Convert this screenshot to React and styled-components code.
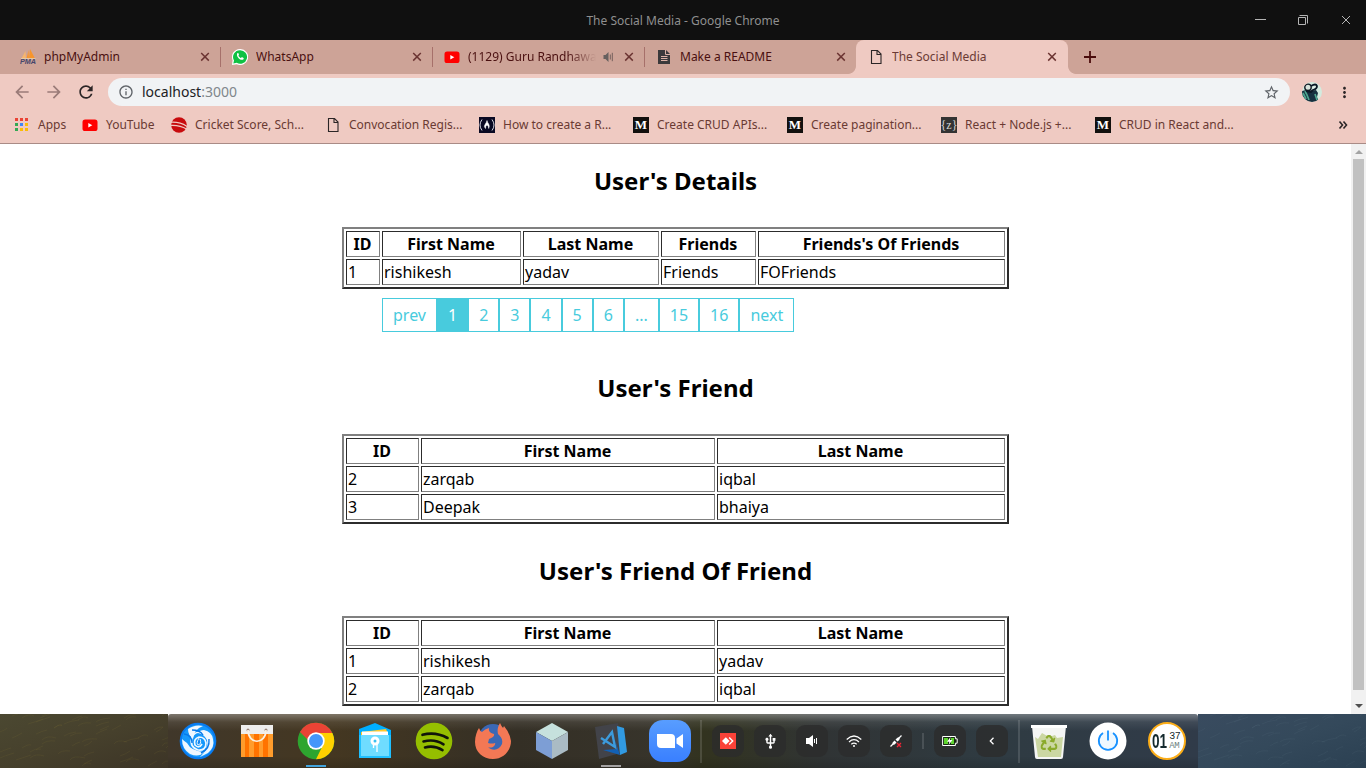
import React from "react";
import styled, { createGlobalStyle, css } from "styled-components";
import {
  MdArrowBack,
  MdArrowForward,
  MdRefresh,
  MdInfoOutline,
  MdStarBorder,
  MdMoreVert,
  MdWifi,
  MdUsb,
} from "react-icons/md";
import { FaRecycle } from "react-icons/fa";

const GlobalStyle = createGlobalStyle`
  * { box-sizing: border-box; }
  body { margin: 0; overflow: hidden; font-family: "Noto Sans", sans-serif; }
  svg { display: block; flex: none; }
`;

const Desktop = styled.div`
  width: 1366px;
  height: 768px;
  display: flex;
  flex-direction: column;
  overflow: hidden;
`;

/* Window frame */
const TitleBar = styled.header`
  height: 40px;
  flex: none;
  display: grid;
  grid-template-columns: 1fr auto 1fr;
  align-items: center;
  background: #101010;
  color: #8f8f8f;
  font-size: 12px;
`;
const WindowButtons = styled.div`
  grid-column: 3;
  display: flex;
  justify-content: flex-end;
  gap: 27px;
  padding-right: 12px;
`;
const WindowTitle = styled.div`
  grid-column: 2;
`;

/* Tabs */
const TabStrip = styled.nav`
  height: 34px;
  flex: none;
  display: flex;
  padding-left: 8px;
  background: #cda397;
`;
const Tab = styled.div`
  position: relative;
  width: 212px;
  display: flex;
  align-items: center;
  gap: 8px;
  padding: 0 ${(p) => (p.$active ? 11 : 10)}px 0 12px;
  font-size: 12px;
  color: ${(p) => (p.$active ? "#6b3a34" : "#4a1010")};
  ${(p) =>
    p.$divider &&
    css`
      &::after {
        content: "";
        position: absolute;
        right: -1px;
        top: 7px;
        width: 1px;
        height: 20px;
        background: #a6706a;
      }
    `}
  ${(p) =>
    p.$active &&
    css`
      background: #efcac2;
      border-radius: 8px 8px 0 0;
      &::before,
      &::after {
        content: "";
        position: absolute;
        bottom: 0;
        width: 8px;
        height: 8px;
      }
      &::before {
        left: -8px;
        background: radial-gradient(circle at 0 0, #cda397 7.5px, #efcac2 8.3px);
      }
      &::after {
        right: -8px;
        background: radial-gradient(circle at 100% 0, #cda397 7.5px, #efcac2 8.3px);
      }
    `}
`;
const TabLabel = styled.span`
  flex: 1;
  min-width: 0;
  padding-bottom: 2px;
  overflow: hidden;
  white-space: nowrap;
  ${(p) => p.$fade && "mask-image: linear-gradient(90deg, #000 78%, transparent 100%);"}
`;
const NewTab = styled.div`
  display: flex;
  align-items: center;
  padding-left: 16px;
`;

/* Toolbar */
const Toolbar = styled.div`
  height: 36px;
  flex: none;
  display: flex;
  align-items: center;
  background: #efcac2;
  padding-left: 12px;
`;
const NavButton = styled.div`
  width: 32px;
  color: ${(p) => (p.$dim ? "#9a7b78" : "#2b2526")};
`;
const AddressBar = styled.div`
  width: 1182px;
  height: 28px;
  display: flex;
  align-items: center;
  gap: 8px;
  padding: 0 10px;
  border-radius: 14px;
  background: #f1f3f5;
  color: #5f6368;
`;
const Address = styled.div`
  flex: 1;
  padding-bottom: 2px;
  font-size: 14px;
  color: #80868b;
  b {
    font-weight: 400;
    color: #202124;
  }
`;
const ToolbarEnd = styled.div`
  display: flex;
  align-items: center;
  gap: 14px;
  padding-left: 12px;
  color: #2b2526;
`;

const BookmarkBar = styled.div`
  height: 34px;
  flex: none;
  display: flex;
  align-items: center;
  padding: 0 0 3px 13px;
  border-bottom: 1px solid #a98b86;
  background: #efcac2;
`;
const Bookmark = styled.div`
  width: ${(p) => p.$w || 154}px;
  display: flex;
  align-items: center;
  gap: 8px;
  font-size: 12px;
  color: #6a3a33;
`;
const BookmarkLabel = styled.span`
  padding-bottom: 2px;
  white-space: nowrap;
`;
const Overflow = styled.div`
  margin-left: 89px;
  color: #2b2526;
`;
const SquareLogo = styled.span`
  width: 16px;
  height: 16px;
  flex: none;
  display: flex;
  align-items: center;
  justify-content: center;
  background: ${(p) => p.$bg};
  color: ${(p) => p.$ink || "#fff"};
  font: ${(p) => p.$font};
`;

/* Page */
const Viewport = styled.div`
  height: 570px;
  flex: none;
  display: flex;
  background: #fff;
`;
const Page = styled.main`
  flex: 1;
  height: 570px;
  overflow: hidden;
  padding: 20px 0 0 342px;
  color: #000;
  font-size: 16px;
`;
const Section = styled.section`
  width: 667px;
  margin-bottom: ${(p) => p.$after}px;
`;
const Heading = styled.h2`
  margin: 0 0 ${(p) => p.$gap || 30}px;
  font-size: 24px;
  line-height: 33px;
  text-align: center;
`;
const Table = styled.table`
  width: 667px;
  table-layout: fixed;
  border-collapse: separate;
  border-spacing: 2px;
  border: 2px solid;
  border-color: #808080 #2c2c2c #2c2c2c #808080;
  line-height: 22px;
`;
const cell = css`
  height: 26px;
  padding: 1px;
  border: 1px solid;
  border-color: #2c2c2c #808080 #808080 #2c2c2c;
`;
const Th = styled.th`
  ${cell}
  padding-right: 2px;
`;
const Td = styled.td`
  ${cell}
`;
const Pager = styled.ul`
  display: flex;
  list-style: none;
  margin: 9px 0 0;
  padding: 0 0 0 40px;
`;
const PageLink = styled.li`
  border: 1px solid #48cbdd;
  padding: 5px 10px;
  line-height: 22px;
  color: ${(p) => (p.$on ? "#fff" : "#48cbdd")};
  background: ${(p) => (p.$on ? "#48cbdd" : "#fff")};
`;
const ScrollTrack = styled.div`
  width: 15px;
  display: flex;
  flex-direction: column;
  align-items: center;
  justify-content: space-between;
  padding: 6px 0;
  background: #f1f1f1;
`;
const ScrollThumb = styled.div`
  width: 11px;
  height: 531px;
  margin: 5px 0 auto;
  background: #c1c1c1;
`;

/* Dock */
const Wallpaper = styled.footer`
  height: 54px;
  flex: none;
  display: grid;
  grid-template-columns: 168px 1030px 168px;
`;
const Scenery = styled.svg`
  width: 168px;
  height: 54px;
`;
const Dock = styled.div`
  display: flex;
  align-items: center;
  padding-left: 1px;
  border-radius: 3px 3px 0 0;
  background:
    linear-gradient(180deg, rgba(255,255,255,.32), rgba(255,255,255,.08) 8px, rgba(0,0,0,0) 17px, rgba(0,0,0,0) 42px, rgba(0,0,0,.14)),
    linear-gradient(90deg, #40372a 0, #443721 16%, #342f25 34%, #37342b 48%, #32331f 52%, #303435 64%, #2f3b42 80%, #303b49 100%);
`;
const AppSlot = styled.div`
  position: relative;
  width: 58.9px;
  height: 54px;
  flex: none;
  display: flex;
  align-items: center;
  justify-content: center;
  ${(p) =>
    p.$running &&
    css`
      &::after {
        content: "";
        position: absolute;
        bottom: 1px;
        width: 20px;
        height: 2px;
        background: ${p.$running};
      }
    `}
`;
const Divider = styled.div`
  width: 2px;
  flex: none;
  height: ${(p) => p.$h}px;
  margin: 0 ${(p) => p.$r}px 0 ${(p) => p.$l}px;
  background: rgba(255, 255, 255, 0.13);
`;
const TrayButton = styled.div`
  width: 32px;
  height: 32px;
  flex: none;
  margin-right: 10px;
  display: flex;
  align-items: center;
  justify-content: center;
  border-radius: 9px;
  background: rgba(43, 43, 43, 0.78);
  color: #fff;
`;
const Clock = styled.div`
  width: 38px;
  height: 38px;
  display: flex;
  align-items: center;
  gap: 2px;
  padding-left: 2px;
  border: 2.5px solid #fbad18;
  border-radius: 50%;
  background: #fff;
  color: #14292d;
`;
const Hours = styled.span`
  font: 700 20px/20px "Liberation Sans", sans-serif;
  letter-spacing: 0;
  width: 15px;
  transform: scaleX(0.68);
  transform-origin: left;
`;
const Minutes = styled.span`
  display: flex;
  flex-direction: column;
  width: 12px;
  font: 10px/10px "Liberation Mono", monospace;
  letter-spacing: -0.5px;
  small {
    font-size: 9px;
    line-height: 9px;
    color: #6c807d;
  }
`;

const CloseIcon = ({ color = "#6b3432" }) => (
  <svg width="10" height="10" viewBox="0 0 10 10">
    <path d="M1.2 1 8.8 8.6M8.8 1 1.2 8.6" stroke={color} strokeWidth="1.5" />
  </svg>
);
const PmaIcon = () => (
  <svg width="16" height="16" viewBox="0 0 16 16">
    <path d="M1.5 9.5 5.5 2 6 9.5z" fill="#f7b56c" />
    <path d="M6.5 9.5 8.5 1 9 9.5zM9 9.5 10 0 15 9.5z" fill="#f8952c" />
    <path d="M1 9.7h14.5" stroke="#e7cfae" />
    <text x="0" y="15" fontFamily="Liberation Sans" fontWeight="700" fontStyle="italic" fontSize="6.5" textLength="16" lengthAdjust="spacingAndGlyphs" fill="#45456b">PMA</text>
  </svg>
);
const WhatsAppIcon = () => (
  <svg width="16" height="16" viewBox="0 0 16 16">
    <path d="M8 0a8 8 0 0 0-7.4 11.2L0 16l4.7-.8A8 8 0 1 0 8 0z" fill="#fff" />
    <path d="M8 1.2a6.8 6.8 0 0 0-6 10.2l-.7 3.2 3.4-.8A6.8 6.8 0 1 0 8 1.2z" fill="#0fc143" />
    <path d="M5.3 4.3c.5-.4 1-.3 1.2.2l.5 1.2-.6 1c.6 1.1 1.4 1.8 2.6 2.3l.9-.9 1.6.8c.4.3.2 1-.2 1.5-2.6 2-7.7-2.8-6-6.1z" fill="#fff" />
  </svg>
);
const YouTubeIcon = () => (
  <svg width="16" height="16" viewBox="0 0 16 16">
    <rect x=".5" y="2.5" width="15" height="11.5" rx="2.6" fill="#f00" />
    <path d="M6.3 5.9v4.7l4-2.35z" fill="#fff" />
  </svg>
);
const FileIcon = () => (
  <svg width="16" height="16" viewBox="0 0 16 16">
    <path d="M3.5 1.5h6l3.5 3.5v9.5H3.5zM9 1.5v4h4" fill="none" stroke="#2b2526" strokeWidth="1.1" />
  </svg>
);
const ReadmeIcon = () => (
  <svg width="16" height="16" viewBox="0 0 16 16">
    <path d="M2 1h8l4 4v10H2z" fill="#3b393b" />
    <path d="M9.5 1v4.5H14M5 7.5h6.5M5 9.5h6.5M5 11.5h6.5" fill="none" stroke="#dbb2a7" />
  </svg>
);
const SpeakerWrap = styled.span`
  margin: 0 2px 0 -2px;
`;
const SpeakerSmall = () => (
  <SpeakerWrap>
    <svg width="12" height="12" viewBox="0 0 12 12">
      <path d="M1.5 4h2l3-3v10l-3-3h-2z" fill="#66605f" />
      <path d="M8.3 3.5v5M10.3 1.8v8.4" stroke="#75605d" fill="none" />
    </svg>
  </SpeakerWrap>
);
const AppsIcon = () => (
  <svg width="17" height="16" viewBox="0 0 17 16">
    {["#ea4335", "#ea4335", "#ea4335", "#34a853", "#4285f4", "#fbbc05", "#34a853", "#fbbc05", "#fbbc05"].map((c, i) => (
      <rect key={i} x={2 + (i % 3) * 5} y={1 + Math.floor(i / 3) * 5} width="3" height="3" fill={c} />
    ))}
  </svg>
);
const CricketIcon = () => (
  <svg width="16" height="16" viewBox="0 0 16 16">
    <circle cx="8" cy="8" r="7.8" fill="#c80b0e" />
    <path d="M-1 5.3Q9 4.6 16 9.5M-1 8.4Q9 7.8 15.5 12" stroke="#efcac2" strokeWidth="1.3" fill="none" />
  </svg>
);
const CodeCampIcon = () => (
  <svg width="16" height="16" viewBox="0 0 16 16">
    <path d="M0 0h16v16H0z" fill="#0a0a23" />
    <path d="M3 2.5Q-1 8 3 13.5M13 2.5q4 5.5 0 11" stroke="#d8d8e2" fill="none" />
    <path d="M8 3.5q.5 2 1.8 3.8Q11 9.300 9.700 11.500 9.500 8.500 8 8 6.500 8.500 6.500 11.500 4.500 9.500 6.200 7.300 7.500 5.500 8 3.500z" fill="#fff" stroke="#fff" strokeWidth=".5" />
  </svg>
);
const Avatar = () => (
  <svg width="20" height="20" viewBox="0 0 20 20">
    <defs><clipPath id="face"><circle cx="10" cy="10" r="10" /></clipPath></defs>
    <g clipPath="url(#face)">
      <path d="M0 0h20v20H0z" fill="#d3ebdf" />
      <path d="M0 9l4-1 5 1 5-1 2 3-1 4 2 5H5L0 14z" fill="#15303f" />
      <path d="M3 9l2 4 2 5M13 12l2 6M1 11l3 6" stroke="#4fa78f" strokeWidth="1.7" fill="none" />
      <circle cx="6" cy="5.300" r="3.200" fill="#d9e4dc" stroke="#111923" strokeWidth="1.400" />
      <path d="M9 4q5-3 6 0 0 3-4 4l-3 2M4 9l5 1 2-2" fill="none" stroke="#0b1825" strokeWidth="1.800" />
      <path d="M11 5.500l2-.500" stroke="#e7efea" strokeWidth="1.500" />
    </g>
  </svg>
);

const DeepinIcon = () => (
  <svg width="38" height="38" viewBox="0 0 38 38">
    <circle cx="19" cy="19" r="18.300" fill="#087bf0" />
    <circle cx="19" cy="19" r="16.300" fill="#1598fb" />
    <g fill="#eef7ff">
      <path d="M9 7Q16 2 24 4 15 7 14 17 9 13 9 7z" />
      <path d="M3 17Q3 27 11 32 20 36 25 30 12 29 8 21 5 19 3 17z" />
      <path d="M25 8q8 2 9 9 2 8-5 14l-8 4q9-8 7-17-3-6-9-7 2-3 6-3z" />
    </g>
    <path d="M29 14Q18 6 13 15q-3 10 6 13 8 1 8-7-1-6-7-6-6 2-4 8 4 4 7-1" fill="none" stroke="#f0f8ff" strokeWidth="1.700" />
    <path d="M5 12q8 1 8 9M22 31q9-4 8-14M13 8q8 0 11 5" fill="none" stroke="#0878e8" strokeWidth="1.400" />
    <path d="M20 16q-3 5-1 7 4-1 2-6" fill="#1586ee" stroke="#e9f5ff" />
  </svg>
);
const StoreIcon = () => (
  <svg width="34" height="34" viewBox="0 0 34 34">
    <path d="M1 1h32v32H1z" fill="#ff9c2c" />
    <path d="M5 9h4v24H5zM14 9h5v24h-5zM23 9h5v24h-5z" fill="#ff7300" />
    <path d="M1 1h32v9H1z" fill="#eee" />
    <circle cx="8" cy="6" r="1.500" fill="#99847a" /><circle cx="26" cy="6" r="1.500" fill="#99847a" />
    <path d="M8 6c0 15 18 15 18 0" fill="none" stroke="#faf0e3" strokeWidth="1.700" />
  </svg>
);
const ChromeIcon = () => (
  <svg width="38" height="38" viewBox="0 0 38 38">
    <circle cx="19" cy="19" r="18.300" fill="#2ea52f" />
    <path d="M3 10A18.300 18.300 0 0 1 35.300 11H19a8 8 0 0 0-7 12z" fill="#ea4335" />
    <path d="M3 10 12 25 13 20z" fill="#2ea52f" />
    <path d="M19 11h16.400A18.300 18.300 0 0 1 19 37.300L26 23z" fill="#ffd100" />
    <circle cx="19" cy="19" r="8.700" fill="#fff" /><circle cx="19" cy="19" r="7" fill="#4597fa" />
  </svg>
);
const FilesIcon = () => (
  <svg width="34" height="38" viewBox="0 0 34 38">
    <path d="M1 7 17 1l16 7v28H1z" fill="#00afff" />
    <path d="M3 10 28 7l2 5v23H3z" fill="#ffca2c" />
    <path d="M1 13h32v23H1z" fill="#6fdcff" /><path d="M4 9.500h26V13H4z" fill="#fff" />
    <path d="M2 13v22h30V13" fill="none" stroke="#20c0ff" strokeWidth="2" />
    <circle cx="17" cy="19" r="3" fill="#3bbff0" stroke="#fff" strokeWidth="3" />
    <path d="M15.500 23v3M19 22v8" stroke="#fff" strokeWidth="1.300" />
  </svg>
);
const SpotifyIcon = () => (
  <svg width="38" height="38" viewBox="0 0 38 38">
    <circle cx="19" cy="19" r="18.300" fill="#95bf00" />
    <path d="M7.500 12.800q13-3.400 25 3.200M8.500 19.500q11-3 20 2.800M10 25.500q9-2.500 17.500 2.600" stroke="#10150a" fill="none" strokeWidth="2.600" strokeLinecap="round" />
  </svg>
);
const FirefoxIcon = () => (
  <svg width="38" height="38" viewBox="0 0 38 38">
    <circle cx="19" cy="17" r="15" fill="#3b68b5" />
    <path d="M5 6q1 3 3 4 3-3 7-4-1 5 5 6 1 3-5 5l-1 4q4 1 7 0 1 1-2 4-3 1-5 0c4 4 11 4 14-3 1-5-1-7-4-10-1-4 0-8 2-11 1 2 2 4 3 5l1-2q6 7 7 15c0 10-8 18-18 18S1 30 1 20C1 14 3 9 5 6z" fill="#f37855" />
  </svg>
);
const CubeIcon = () => (
  <svg width="34" height="38" viewBox="0 0 34 38">
    <path d="M17 1 33 10 17 19 1 10z" fill="#c6e1dd" /><path d="M1 10 17 19v18L1 28z" fill="#7d9ed5" /><path d="M33 10 17 19v18l16-9z" fill="#aabbc4" />
  </svg>
);
const CodeIcon = () => (
  <svg width="36" height="38" viewBox="0 0 36 38">
    <path d="M2 5 25 1l6 29-25 7z" fill="#424349" />
    <path d="M24 4l7 2 3 24-7 3z" fill="#319ae2" />
    <path d="M10 28l14-1-2-9 5 15z" fill="#1261b5" />
    <path d="M8 16l14 9-3-15-9 12" fill="none" stroke="#3c9bdd" strokeWidth="2.400" />
  </svg>
);
const ZoomIcon = () => (
  <svg width="42" height="42" viewBox="0 0 42 42">
    <defs><linearGradient id="zm" x2="0" y2="1"><stop stopColor="#589dff" /><stop offset="1" stopColor="#397fff" /></linearGradient></defs>
    <rect width="42" height="42" rx="14" fill="url(#zm)" />
    <path d="M8 14h14q4 0 4 4v10H12q-4 0-4-4zM27.500 18.500 34 14v14l-6.500-4.500z" fill="#fff" />
  </svg>
);
const TrashIcon = () => (
  <svg width="38" height="38" viewBox="0 0 38 38">
    <path d="M2 4h34l-3 31q0 2-2 2H7q-2 0-2-2z" fill="#f4f5f4" />
    <path d="M5 15l3 2 4-6 7 4 6-2 2 3 6-1-2 20H8z" fill="#cbd7a3" />
    <path d="M1 3h36v3H1z" fill="#fff" />
    <FaRecycle x="10.500" y="13" width="17" height="17" size={17} color="#8aaa2c" />
  </svg>
);
const PowerIcon = () => (
  <svg width="38" height="38" viewBox="0 0 38 38">
    <circle cx="19" cy="19" r="18.500" fill="#fff" /><circle cx="19" cy="19" r="10" fill="#eef8ff" />
    <path d="M14 11a9.200 9.200 0 1 0 10 0M19 8.500v10" fill="none" stroke="#1791ff" strokeWidth="1.800" />
  </svg>
);

const AnyDeskIcon = () => (
  <svg width="16" height="16" viewBox="0 0 16 16">
    <path d="M0 0h16v16H0z" fill="#fb4238" /><path d="M2 8 5.800 4.200 9.600 8l-3.800 3.800z" fill="#fff" /><path d="M9.200 4.500 12.700 8l-3.500 3.500" fill="none" stroke="#fff" strokeWidth="1.400" />
  </svg>
);
const VolumeIcon = () => (
  <svg width="14" height="14" viewBox="0 0 14 14">
    <path d="M1 4h3l4-3v12l-4-3H1z" fill="#fff" /><path d="M9.500 5v4M11.500 4v6" stroke="#fff" />
  </svg>
);
const WifiIcon = () => (
  <svg width="16" height="14" viewBox="0 0 16 14">
    <path d="M.7 5.500q7.300-7 14.600 0M3 8q5-4.600 10 0M5.300 10.300q2.700-2.300 5.400 0" fill="none" stroke="#fff" strokeWidth="1.200" />
    <circle cx="8" cy="12" r="1" fill="#fff" />
  </svg>
);
const PlugIcon = () => (
  <svg width="14" height="14" viewBox="0 0 14 14">
    <path d="M1.500 12.500 4 10M9.500 4.500l3-3" stroke="#fff" strokeWidth="1.300" />
    <path d="M3 11q0-3 2.500-4.500l2 2Q6 11 3 11zM6.500 5.500Q8 3 11 3q0 3-2.500 4.500z" fill="#fff" />
    <path d="M8 9l4 4M12 9l-4 4" stroke="#f12435" strokeWidth="1.300" />
  </svg>
);
const BatteryIcon = () => (
  <svg width="16" height="12" viewBox="0 0 16 12">
    <path d="M.6 1.500h12.800v2.300h1.800v4.400h-1.800v2.300H.6z" fill="#182814" stroke="#fff" /><path d="M2 3h4v6H2zM9 3h3v6H9z" fill="#5ed42e" /><path d="M8.500 2 5 6.800h2.300L6.700 10 10.400 5H8z" fill="#fff" />
  </svg>
);

const DataTable = ({ cols, head, rows }) => (
  <Table>
    <colgroup>{cols.map((w, i) => <col key={i} width={w} />)}</colgroup>
    <thead><tr>{head.map((h) => <Th key={h}>{h}</Th>)}</tr></thead>
    <tbody>{rows.map((r, i) => <tr key={i}>{r.map((c, j) => <Td key={j}>{c}</Td>)}</tr>)}</tbody>
  </Table>
);

const MediumLogo = () => <SquareLogo $bg="#12100e" $font={'700 13px/16px "Liberation Serif", serif'}>M</SquareLogo>;
const ZLogo = () => <SquareLogo $bg="#333" $ink="#d5d5d5" $font={'12px/14px "Liberation Serif", serif'}>{"{z}"}</SquareLogo>;

const tabs = [
  { icon: <PmaIcon />, label: "phpMyAdmin", divider: true },
  { icon: <WhatsAppIcon />, label: "WhatsApp", divider: true },
  { icon: <YouTubeIcon />, label: "(1129) Guru Randhawa", divider: true, audio: true },
  { icon: <ReadmeIcon />, label: "Make a README" },
  { icon: <FileIcon />, label: "The Social Media", active: true },
];
const bookmarks = [
  { icon: <AppsIcon />, label: "Apps", w: 69 },
  { icon: <YouTubeIcon />, label: "YouTube", w: 89 },
  { icon: <CricketIcon />, label: "Cricket Score, Sch..." },
  { icon: <FileIcon />, label: "Convocation Regis..." },
  { icon: <CodeCampIcon />, label: "How to create a R..." },
  { icon: <MediumLogo />, label: "Create CRUD APIs..." },
  { icon: <MediumLogo />, label: "Create pagination..." },
  { icon: <ZLogo />, label: "React + Node.js +..." },
  { icon: <MediumLogo />, label: "CRUD in React and..." },
];
const pages = ["prev", "1", "2", "3", "4", "5", "6", "...", "15", "16", "next"];
const apps = [
  [<DeepinIcon />], [<StoreIcon />], [<ChromeIcon />, "#42a3dc"], [<FilesIcon />], [<SpotifyIcon />],
  [<FirefoxIcon />], [<CubeIcon />], [<CodeIcon />, "#a4a2a2"], [<ZoomIcon />],
];
const tray = [<AnyDeskIcon />, <MdUsb size={17} />, <VolumeIcon />, <WifiIcon />, <PlugIcon />];

const strokes = Array.from({ length: 60 }, (_, i) => {
  const x = (i * 67 + i * i * 5) % 168;
  const y = (i * 29 + i * i * 3) % 54;
  return `M${x} ${y}q${3 + (i % 5)} ${-2 - (i % 4)} ${7 + (i % 9)} ${-5 + (i % 4)}`;
}).join("");
const Landscape = ({ id, from, mid, to, line, strength }) => (
  <Scenery viewBox="0 0 168 54">
    <defs>
      <linearGradient id={id} x2="1" y2="1"><stop stopColor={from} /><stop offset=".5" stopColor={mid} /><stop offset="1" stopColor={to} /></linearGradient>
    </defs>
    <path d="M0 0h168v54H0z" fill={`url(#${id})`} />
    <path d={strokes} stroke={line} strokeOpacity={strength} strokeWidth=".8" fill="none" />
  </Scenery>
);

export default function App() {
  return (
    <Desktop>
      <GlobalStyle />
      <TitleBar>
        <WindowTitle>The Social Media - Google Chrome</WindowTitle>
        <WindowButtons>
          <svg width="16" height="16"><path d="M3 7.500h11" stroke="#b5b5b5" /></svg>
          <svg width="16" height="16"><path d="M3.500 5.500h7v7h-7zM4.500 3.500h8v8" fill="none" stroke="#b5b5b5" /></svg>
          <svg width="16" height="16"><path d="M4 4l8 8M12 4l-8 8" stroke="#b5b5b5" /></svg>
        </WindowButtons>
      </TitleBar>
      <TabStrip>
        {tabs.map((t) => (
          <Tab key={t.label} $active={t.active} $divider={t.divider}>
            {t.icon}
            <TabLabel $fade={t.audio}>{t.label}</TabLabel>
            {t.audio && <SpeakerSmall />}
            <CloseIcon />
          </Tab>
        ))}
        <NewTab>
          <svg width="12" height="12"><path d="M6 0v12M0 6h12" stroke="#4a0c0c" strokeWidth="1.800" /></svg>
        </NewTab>
      </TabStrip>
      <Toolbar>
        <NavButton $dim><MdArrowBack size={20} /></NavButton>
        <NavButton $dim><MdArrowForward size={20} /></NavButton>
        <NavButton><MdRefresh size={20} /></NavButton>
        <AddressBar>
          <MdInfoOutline size={16} />
          <Address><b>localhost</b>:3000</Address>
          <MdStarBorder size={17} />
        </AddressBar>
        <ToolbarEnd>
          <Avatar />
          <MdMoreVert size={17} />
        </ToolbarEnd>
      </Toolbar>
      <BookmarkBar>
        {bookmarks.map((b) => (
          <Bookmark key={b.label} $w={b.w}>{b.icon}<BookmarkLabel>{b.label}</BookmarkLabel></Bookmark>
        ))}
        <Overflow>
          <svg width="10" height="10"><path d="M1.500 1.500 4.500 5l-3 3.500M5.500 1.500l3 3.500-3 3.500" fill="none" stroke="currentColor" strokeWidth="1.600" /></svg>
        </Overflow>
      </BookmarkBar>
      <Viewport>
        <Page>
          <Section $after={39}>
            <Heading>User's Details</Heading>
            <DataTable
              cols={[34, 139, 136, 95, 247]}
              head={["ID", "First Name", "Last Name", "Friends", "Friends's Of Friends"]}
              rows={[["1", "rishikesh", "yadav", "Friends", "FOFriends"]]}
            />
            <Pager>{pages.map((p) => <PageLink key={p} $on={p === "1"}>{p}</PageLink>)}</Pager>
          </Section>
          <Section $after={30}>
            <Heading>User's Friend</Heading>
            <DataTable cols={[73, 294, 288]} head={["ID", "First Name", "Last Name"]} rows={[["2", "zarqab", "iqbal"], ["3", "Deepak", "bhaiya"]]} />
          </Section>
          <Section $after={0}>
            <Heading $gap={29}>User's Friend Of Friend</Heading>
            <DataTable cols={[73, 294, 288]} head={["ID", "First Name", "Last Name"]} rows={[["1", "rishikesh", "yadav"], ["2", "zarqab", "iqbal"]]} />
          </Section>
        </Page>
        <ScrollTrack>
          <svg width="8" height="4"><path d="M0 4 4 0l4 4z" fill="#a3a3a3" /></svg>
          <ScrollThumb />
          <svg width="8" height="4"><path d="M0 0h8L4 4z" fill="#505050" /></svg>
        </ScrollTrack>
      </Viewport>
      <Wallpaper>
        <Landscape id="grass" from="#4b4831" mid="#46402c" to="#3c3426" line="#8f8338" strength=".16" />
        <Dock>
          {apps.map(([icon, running], i) => <AppSlot key={i} $running={running}>{icon}</AppSlot>)}
          <Divider $h={43} $l={1} $r={10} />
          {tray.map((icon, i) => <TrayButton key={i}>{icon}</TrayButton>)}
          <Divider $h={16} $l={0} $r={10} />
          <TrayButton><BatteryIcon /></TrayButton>
          <TrayButton>
            <svg width="6" height="8"><path d="M4.500.8 1.300 4l3.200 3.200" fill="none" stroke="#fff" strokeWidth="1.300" /></svg>
          </TrayButton>
          <Divider $h={43} $l={0} $r={0} />
          <AppSlot><TrashIcon /></AppSlot>
          <AppSlot><PowerIcon /></AppSlot>
          <AppSlot>
            <Clock><Hours>01</Hours><Minutes>37<small>AM</small></Minutes></Clock>
          </AppSlot>
        </Dock>
        <Landscape id="sea" from="#394b5f" mid="#34495b" to="#2b4052" line="#7d97a5" strength=".1" />
      </Wallpaper>
    </Desktop>
  );
}
